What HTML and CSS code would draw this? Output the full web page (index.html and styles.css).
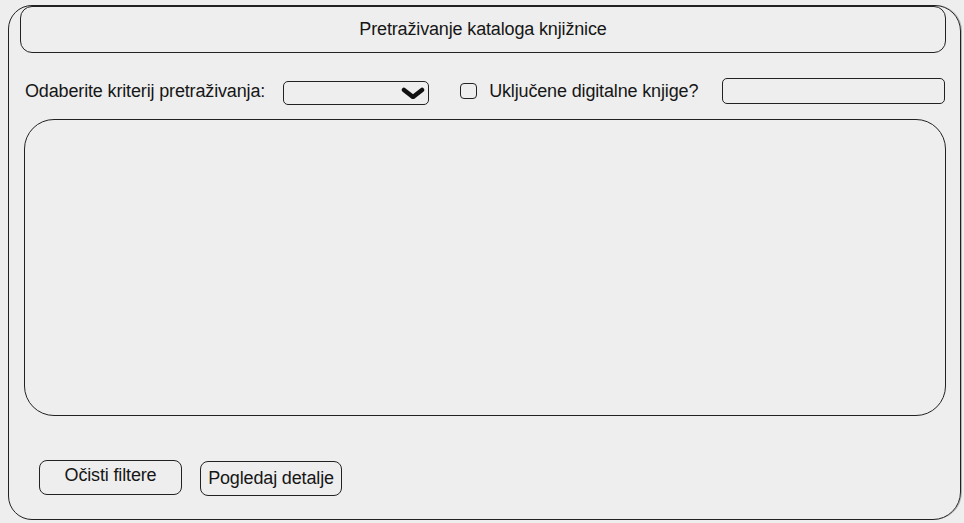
FILE: index.html
```html
<!DOCTYPE html>
<html lang="hr">
<head>
<meta charset="utf-8">
<title>Pretraživanje kataloga knjižnice</title>
<link rel="stylesheet" href="styles.css">
</head>
<body>
<div class="frame">
  <div class="title">Pretraživanje kataloga knjižnice</div>
  <div class="filters">
    <span class="label">Odaberite kriterij pretraživanja:</span>
    <div class="select">
      <svg class="chev" width="24" height="12" viewBox="0 0 24 12"><polyline points="3,3 12,10 21,3" fill="none" stroke="#111" stroke-width="4.5" stroke-linecap="round" stroke-linejoin="round"/></svg>
    </div>
    <span class="check"></span>
    <span class="label check-label">Uključene digitalne knjige?</span>
    <div class="textbox"></div>
  </div>
  <div class="results"></div>
  <div class="actions">
    <button class="btn btn-clear">Očisti filtere</button>
    <button class="btn btn-details">Pogledaj detalje</button>
  </div>
</div>
</body>
</html>
```
FILE: styles.css
```css
html, body {
  margin: 0;
  padding: 0;
  background: #eeeeee;
}
body {
  padding: 5px 3px 3px 8px;
  font-family: "Liberation Sans", Arial, sans-serif;
  color: #161616;
}
.frame {
  box-sizing: border-box;
  width: 953px;
  height: 515px;
  border: 1.5px solid #222;
  border-radius: 24px 26px 28px 24px;
  box-shadow: 1px 0 0 rgba(0,0,0,0.25);
  display: flex;
  flex-direction: column;
}
.title {
  box-sizing: border-box;
  margin: -0.5px 14px 0 11px;
  height: 47px;
  border: 1.5px solid #222;
  border-radius: 12px;
  display: flex;
  align-items: center;
  justify-content: center;
  font-size: 18px;
  letter-spacing: -0.15px;
}
.filters {
  display: flex;
  align-items: center;
  margin: 25px 0 0 16px;
  height: 27px;
}
.label {
  font-size: 18px;
  letter-spacing: -0.15px;
  white-space: nowrap;
}
.select {
  box-sizing: border-box;
  margin-left: 18px;
  margin-top: 3px;
  width: 146px;
  height: 24px;
  border: 1.5px solid #222;
  border-radius: 5px;
  display: flex;
  align-items: center;
  justify-content: flex-end;
  padding-right: 3px;
}
.check {
  box-sizing: border-box;
  margin-left: 31px;
  width: 17px;
  height: 16px;
  border: 1.5px solid #222;
  border-radius: 4px;
}
.check-label {
  margin-left: 12px;
}
.textbox {
  box-sizing: border-box;
  margin-left: auto;
  margin-right: 15px;
  margin-top: -1px;
  width: 223px;
  height: 26px;
  border: 1.5px solid #222;
  border-radius: 5px;
}
.results {
  box-sizing: border-box;
  margin: 14px 14px 0 15px;
  height: 297px;
  border: 1.5px solid #222;
  border-radius: 30px;
}
.actions {
  display: flex;
  gap: 18px;
  margin: 44px 0 0 30px;
}
.btn {
  box-sizing: border-box;
  height: 35px;
  border: 1.5px solid #222;
  border-radius: 8px;
  background: transparent;
  font-family: "Liberation Sans", Arial, sans-serif;
  font-size: 18px;
  letter-spacing: -0.15px;
  color: #161616;
  padding: 0;
}
.btn-clear {
  width: 143px;
  padding-bottom: 3px;
}
.btn-details {
  width: 142px;
  margin-top: 1px;
}
```
